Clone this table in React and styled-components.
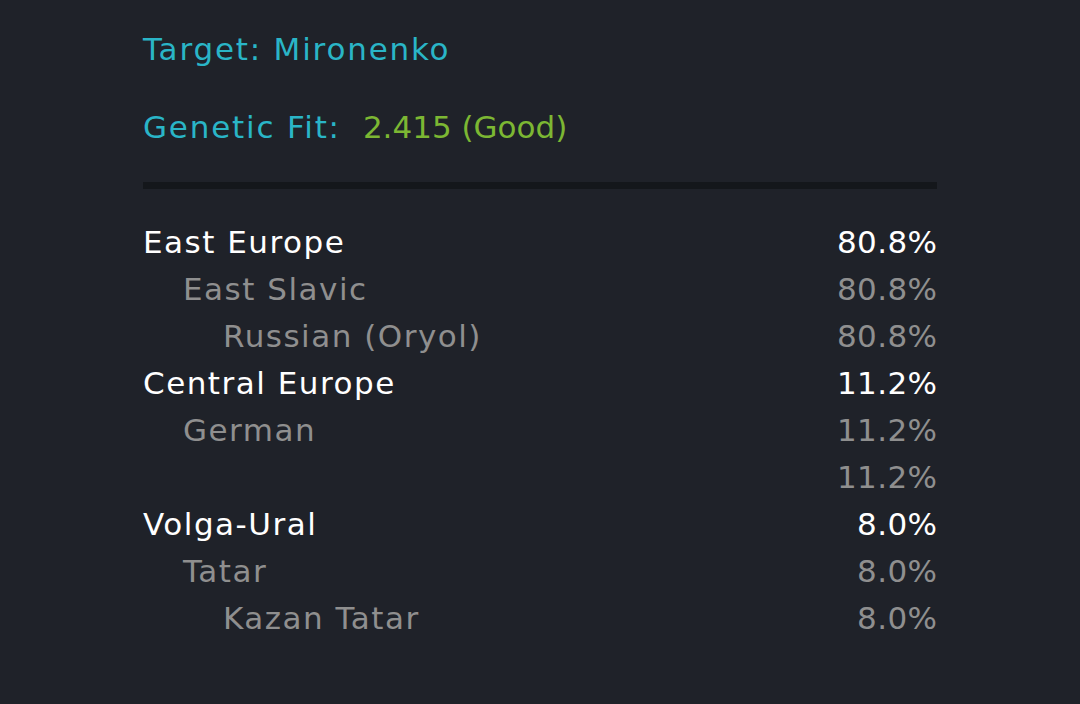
import styled, { createGlobalStyle } from "styled-components";

const Global = createGlobalStyle`
  html, body {
    margin: 0;
    background: #1f2229;
  }
  body {
    font-family: "DejaVu Sans", "Noto Sans", sans-serif;
  }
`;

const Page = styled.div`
  width: 794px;
  padding: 29px 0 40px 143px;
`;

const Title = styled.div`
  font-size: 31px;
  letter-spacing: 1.8px;
  line-height: 40px;
  color: #2ab5c7;
  margin-bottom: ${(p) => p.$gap || 0}px;
`;

const Score = styled.span`
  color: #7cb733;
  margin-left: 22px;
  letter-spacing: 0;
`;

const Divider = styled.div`
  height: 7px;
  background: #14171b;
  margin: 35px 0 29px;
`;

const Row = styled.div`
  display: flex;
  justify-content: space-between;
  align-items: center;
  height: 47px;
  font-size: 31px;
  letter-spacing: 1.5px;
  color: ${(p) => (p.$level === 0 ? "#ffffff" : "#8f8f8f")};
`;

const Label = styled.span`
  padding-left: ${(p) => p.$level * 40}px;
`;

const Value = styled.span`
  letter-spacing: 0.4px;
  margin-right: -0.4px;
`;

const rows = [
  { name: "East Europe", value: "80.8%", level: 0 },
  { name: "East Slavic", value: "80.8%", level: 1 },
  { name: "Russian (Oryol)", value: "80.8%", level: 2 },
  { name: "Central Europe", value: "11.2%", level: 0 },
  { name: "German", value: "11.2%", level: 1 },
  { name: "", value: "11.2%", level: 2 },
  { name: "Volga-Ural", value: "8.0%", level: 0 },
  { name: "Tatar", value: "8.0%", level: 1 },
  { name: "Kazan Tatar", value: "8.0%", level: 2 },
];

export default function App() {
  return (
    <Page>
      <Global />
      <Title $gap={38}>Target: Mironenko</Title>
      <Title>
        Genetic Fit:<Score>2.415 (Good)</Score>
      </Title>
      <Divider />
      {rows.map((r, i) => (
        <Row key={i} $level={r.level}>
          <Label $level={r.level}>{r.name}</Label>
          <Value>{r.value}</Value>
        </Row>
      ))}
    </Page>
  );
}
